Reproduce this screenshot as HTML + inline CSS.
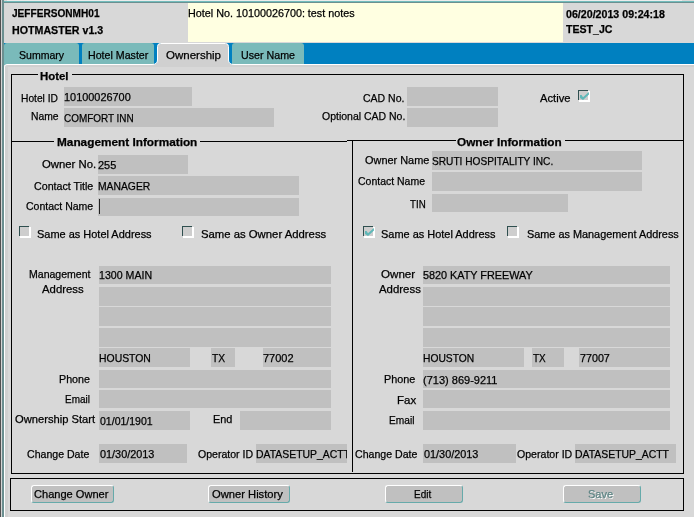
<!DOCTYPE html>
<html><head><meta charset="utf-8"><title>HOTMASTER</title>
<style>
html,body{margin:0;padding:0;}
body{width:694px;height:517px;overflow:hidden;background:#d8d8d8;font-family:"Liberation Sans",sans-serif;font-size:11px;color:#000;position:relative;}
div,span{position:absolute;box-sizing:border-box;}
.f{background:#c0c0c0;overflow:hidden;white-space:nowrap;}
.t{-webkit-text-stroke:0.25px #000;white-space:nowrap;line-height:12px;height:12px;transform-origin:0 0;}
.b{font-weight:bold;}
.l{background:#000;}
.cb{width:12px;height:12px;}.cw{left:1px;top:1px;width:11px;height:11px;background:#fff;}.cd{left:0;top:0;width:10px;height:10px;background:#2f4f4f;}.ci{left:1px;top:1px;width:9px;height:9px;background:#cecece;}
.btn{height:18px;background:#c0c0c0;border:1px solid;border-color:#fff #6aa #6aa #fff;border-radius:3px;overflow:hidden;}
</style></head><body><div id="w" style="left:0;top:0;width:694px;height:517px;will-change:transform">

<div style="left:0;top:0;width:1px;height:517px;background:#505050"></div>
<div style="left:1px;top:0;width:1px;height:517px;background:#d4d4d4"></div>
<div style="left:2px;top:0;width:2px;height:517px;background:#6b8f90"></div>
<div style="left:7px;top:0;width:675px;height:1px;background:#ececec"></div>
<div style="left:4px;top:1px;width:690px;height:1px;background:#72bcbc"></div>
<div style="left:4px;top:2px;width:690px;height:1px;background:#6b9090"></div>
<div style="left:188px;top:3px;width:375px;height:39px;background:#ffffe1"></div>
<svg width="694" height="517" viewBox="0 0 694 517" style="position:absolute;left:0;top:0"><rect x="4" y="43" width="690" height="22" fill="#0080c0"/><path d="M4,65 V46 Q4,43 7,43 H76 Q79,43 79,46 V65 Z" fill="#7ababa"/><path d="M82,65 V46 Q82,43 85,43 H151 Q154,43 154,46 V65 Z" fill="#7ababa"/><path d="M232,65 V46 Q232,43 235,43 H301 Q304,43 304,46 V65 Z" fill="#7ababa"/><path d="M4.5,520 V67 Q4.5,64.5 7,64.5 H152 Q157.5,64.5 157.5,60 V46.5 Q157.5,43.5 160.5,43.5 H225.5 Q228.5,43.5 228.5,46.5 V60 Q228.5,64.5 234,64.5 H700 V520 Z" fill="#d0d0d0" stroke="#fff" stroke-width="1"/><rect x="8" y="67" width="690" height="460" fill="#d8d8d8"/></svg>
<div class="f" style="left:64px;top:87px;width:128px;height:19px"><span class="t" style="left:0.13px;top:4px;transform:scaleX(0.991)">10100026700</span></div>
<div class="f" style="left:64px;top:108px;width:210px;height:19px"><span class="t" style="left:0.45px;top:4px;transform:scaleX(0.903)">COMFORT INN</span></div>
<div class="f" style="left:98px;top:155px;width:90px;height:19px"><span class="t" style="left:0.40px;top:4px;transform:scaleX(0.996)">255</span></div>
<div class="f" style="left:98px;top:176px;width:201px;height:19px"><span class="t" style="left:0.08px;top:4px;transform:scaleX(0.940)">MANAGER</span></div>
<div class="f" style="left:98px;top:198px;width:201px;height:18px"></div>
<div class="f" style="left:99px;top:266px;width:232px;height:18px"><span class="t" style="left:0.16px;top:3px;transform:scaleX(0.965)">1300 MAIN</span></div>
<div class="f" style="left:99px;top:287px;width:232px;height:19px"></div>
<div class="f" style="left:99px;top:307px;width:232px;height:19px"></div>
<div class="f" style="left:99px;top:328px;width:232px;height:19px"></div>
<div class="f" style="left:99px;top:348px;width:91px;height:19px"><span class="t" style="left:-0.33px;top:4px;transform:scaleX(0.947)">HOUSTON</span></div>
<div class="f" style="left:211px;top:348px;width:24px;height:19px"><span class="t" style="left:0.57px;top:4px;transform:scaleX(0.933)">TX</span></div>
<div class="f" style="left:263px;top:348px;width:68px;height:19px"><span class="t" style="left:0.47px;top:4px;transform:scaleX(1.001)">77002</span></div>
<div class="f" style="left:99px;top:370px;width:232px;height:18px"></div>
<div class="f" style="left:99px;top:390px;width:232px;height:18px"></div>
<div class="f" style="left:99px;top:411px;width:91px;height:19px"><span class="t" style="left:0.54px;top:4px;transform:scaleX(0.957)">01/01/1901</span></div>
<div class="f" style="left:240px;top:411px;width:91px;height:19px"></div>
<div class="f" style="left:99px;top:444px;width:88px;height:19px"><span class="t" style="left:0.53px;top:4px;transform:scaleX(0.988)">01/30/2013</span></div>
<div class="f" style="left:256px;top:444px;width:91px;height:19px"><span class="t" style="left:-0.03px;top:4px;transform:scaleX(0.947)">DATASETUP_ACTT</span></div>
<div class="f" style="left:407px;top:87px;width:91px;height:19px"></div>
<div class="f" style="left:407px;top:108px;width:91px;height:19px"></div>
<div class="f" style="left:432px;top:151px;width:210px;height:19px"><span class="t" style="left:0.24px;top:4px;transform:scaleX(0.921)">SRUTI HOSPITALITY INC.</span></div>
<div class="f" style="left:432px;top:172px;width:210px;height:19px"></div>
<div class="f" style="left:432px;top:194px;width:136px;height:18px"></div>
<div class="f" style="left:423px;top:266px;width:247px;height:18px"><span class="t" style="left:0.31px;top:3px;transform:scaleX(0.984)">5820 KATY FREEWAY</span></div>
<div class="f" style="left:423px;top:287px;width:247px;height:19px"></div>
<div class="f" style="left:423px;top:307px;width:247px;height:19px"></div>
<div class="f" style="left:423px;top:328px;width:247px;height:19px"></div>
<div class="f" style="left:423px;top:348px;width:101px;height:19px"><span class="t" style="left:-0.02px;top:4px;transform:scaleX(0.934)">HOUSTON</span></div>
<div class="f" style="left:532px;top:348px;width:32px;height:19px"><span class="t" style="left:0.77px;top:4px;transform:scaleX(0.904)">TX</span></div>
<div class="f" style="left:579px;top:348px;width:91px;height:19px"><span class="t" style="left:0.69px;top:4px;transform:scaleX(0.974)">77007</span></div>
<div class="f" style="left:423px;top:370px;width:247px;height:18px"><span class="t" style="left:0.17px;top:4px;transform:scaleX(1.001)">(713) 869-9211</span></div>
<div class="f" style="left:423px;top:390px;width:247px;height:18px"></div>
<div class="f" style="left:423px;top:411px;width:247px;height:19px"></div>
<div class="f" style="left:423px;top:444px;width:93px;height:19px"><span class="t" style="left:0.53px;top:4px;transform:scaleX(0.988)">01/30/2013</span></div>
<div class="f" style="left:575px;top:444px;width:101px;height:19px"><span class="t" style="left:0.47px;top:4px;transform:scaleX(0.947)">DATASETUP_ACTT</span></div>
<div style="left:99px;top:199px;width:1px;height:15px;background:#202020"></div>
<span class="t" style="left:20.79px;top:92px;transform:scaleX(0.930)">Hotel ID</span>
<span class="t" style="left:30.88px;top:110px;transform:scaleX(0.939)">Name</span>
<span class="t" style="left:42.19px;top:158px;transform:scaleX(1.029)">Owner No.</span>
<span class="t" style="left:34.22px;top:180px;transform:scaleX(0.970)">Contact Title</span>
<span class="t" style="left:26.22px;top:200px;transform:scaleX(0.956)">Contact Name</span>
<span class="t" style="left:28.56px;top:268px;transform:scaleX(0.958)">Management</span>
<span class="t" style="left:41.70px;top:283px;transform:scaleX(1.032)">Address</span>
<span class="t" style="left:58.75px;top:373px;transform:scaleX(0.974)">Phone</span>
<span class="t" style="left:65.11px;top:393px;transform:scaleX(0.904)">Email</span>
<span class="t" style="left:15.09px;top:413px;transform:scaleX(1.015)">Ownership Start</span>
<span class="t" style="left:27.12px;top:448px;transform:scaleX(0.961)">Change Date</span>
<span class="t" style="left:212.63px;top:413px;transform:scaleX(0.989)">End</span>
<span class="t" style="left:197.52px;top:448px;transform:scaleX(0.959)">Operator ID</span>
<span class="t" style="left:363.32px;top:92px;transform:scaleX(0.955)">CAD No.</span>
<span class="t" style="left:321.52px;top:110px;transform:scaleX(0.953)">Optional CAD No.</span>
<span class="t" style="left:540.00px;top:92px;transform:scaleX(1.017)">Active</span>
<span class="t" style="left:365.10px;top:154px;transform:scaleX(0.993)">Owner Name</span>
<span class="t" style="left:358.12px;top:175px;transform:scaleX(0.953)">Contact Name</span>
<span class="t" style="left:409.78px;top:198px;transform:scaleX(0.884)">TIN</span>
<span class="t" style="left:380.97px;top:268px;transform:scaleX(1.055)">Owner</span>
<span class="t" style="left:379.00px;top:283px;transform:scaleX(1.038)">Address</span>
<span class="t" style="left:384.44px;top:373px;transform:scaleX(0.984)">Phone</span>
<span class="t" style="left:397.39px;top:394px;transform:scaleX(1.043)">Fax</span>
<span class="t" style="left:389.49px;top:414px;transform:scaleX(0.924)">Email</span>
<span class="t" style="left:355.02px;top:448px;transform:scaleX(0.963)">Change Date</span>
<span class="t" style="left:517.22px;top:448px;transform:scaleX(0.961)">Operator ID</span>
<span class="t" style="left:37.20px;top:228px;transform:scaleX(0.997)">Same as Hotel Address</span>
<span class="t" style="left:200.69px;top:228px;transform:scaleX(1.029)">Same as Owner Address</span>
<span class="t" style="left:381.00px;top:228px;transform:scaleX(0.996)">Same as Hotel Address</span>
<span class="t" style="left:527.01px;top:228px;transform:scaleX(0.989)">Same as Management Address</span>
<span class="t b" style="left:40.42px;top:70px;transform:scaleX(1.038)">Hotel</span>
<span class="t b" style="left:56.80px;top:136px;transform:scaleX(1.073)">Management Information</span>
<span class="t b" style="left:457.46px;top:136px;transform:scaleX(1.071)">Owner Information</span>
<span class="t b" style="left:11.77px;top:7px;transform:scaleX(0.918)">JEFFERSONMH01</span>
<span class="t b" style="left:11.77px;top:24px;transform:scaleX(0.969)">HOTMASTER v1.3</span>
<span class="t b" style="left:565.52px;top:8px;transform:scaleX(0.968)">06/20/2013 09:24:18</span>
<span class="t b" style="left:566.38px;top:23px;transform:scaleX(0.961)">TEST_JC</span>
<span class="t" style="left:187.74px;top:7px;transform:scaleX(0.980)">Hotel No. 10100026700: test notes</span>
<span class="t" style="left:19.02px;top:49px;transform:scaleX(0.957)">Summary</span>
<span class="t" style="left:87.65px;top:49px;transform:scaleX(0.967)">Hotel Master</span>
<span class="t" style="left:165.78px;top:49px;transform:scaleX(1.046)">Ownership</span>
<span class="t" style="left:240.65px;top:49px;transform:scaleX(0.971)">User Name</span>
<div class="l" style="left:11px;top:74px;width:27px;height:1px"></div>
<div class="l" style="left:72px;top:74px;width:612px;height:1px"></div>
<div class="l" style="left:11px;top:74px;width:1px;height:400px"></div>
<div class="l" style="left:683px;top:74px;width:1px;height:400px"></div>
<div class="l" style="left:11px;top:473px;width:673px;height:1px"></div>
<div class="l" style="left:11px;top:141px;width:43px;height:1px"></div>
<div class="l" style="left:200px;top:141px;width:147px;height:1px"></div>
<div class="l" style="left:347px;top:140px;width:109px;height:1px"></div>
<div class="l" style="left:565px;top:140px;width:119px;height:1px"></div>
<div class="l" style="left:352px;top:141px;width:1px;height:331px"></div>
<div class="l" style="left:10px;top:478px;width:674px;height:1px"></div>
<div class="l" style="left:10px;top:510px;width:674px;height:1px"></div>
<div class="l" style="left:10px;top:478px;width:1px;height:33px"></div>
<div class="l" style="left:683px;top:478px;width:1px;height:33px"></div>
<div class="cb" style="left:19px;top:226px"><div class="cw"></div><div class="cd"></div><div class="ci"></div></div>
<div class="cb" style="left:182px;top:226px"><div class="cw"></div><div class="cd"></div><div class="ci"></div></div>
<div class="cb" style="left:363px;top:226px"><div class="cw"></div><div class="cd"></div><div class="ci"></div><svg width="12" height="12" viewBox="0 0 12 12" style="position:absolute;left:0;top:0"><path d="M2,5.1 L3.6,5.1 L5,7.2 L10.8,2.1 L11,4.4 L5,10 L2,7.9 Z" fill="#5fb8b8"/></svg></div>
<div class="cb" style="left:507px;top:226px"><div class="cw"></div><div class="cd"></div><div class="ci"></div></div>
<div class="cb" style="left:578px;top:90px"><div class="cw"></div><div class="cd"></div><div class="ci"></div><svg width="12" height="12" viewBox="0 0 12 12" style="position:absolute;left:0;top:0"><path d="M2,5.1 L3.6,5.1 L5,7.2 L10.8,2.1 L11,4.4 L5,10 L2,7.9 Z" fill="#5fb8b8"/></svg></div>
<div class="btn" style="left:31px;top:485px;width:83px;"><span class="t" style="left:2.10px;top:2px;transform:scaleX(1.006);">Change Owner</span></div>
<div class="btn" style="left:208px;top:485px;width:82px;"><span class="t" style="left:3.19px;top:2px;transform:scaleX(1.017);">Owner History</span></div>
<div class="btn" style="left:385px;top:485px;width:78px;"><span class="t" style="left:27.91px;top:2px;transform:scaleX(0.906);">Edit</span></div>
<div class="btn" style="left:563px;top:485px;width:78px;"><span class="t" style="left:24.40px;top:2px;transform:scaleX(1.003);color:#5f8585;-webkit-text-stroke-color:#5f8585;text-shadow:1px 1px 0 #fff;">Save</span></div>
</div></body></html>
